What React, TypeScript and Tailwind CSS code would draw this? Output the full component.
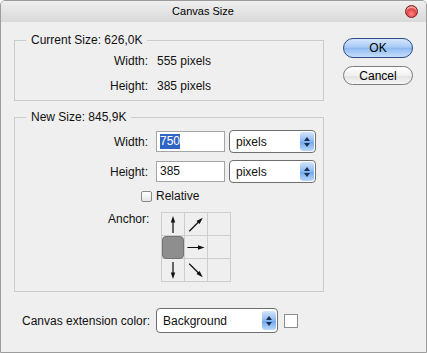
import React from 'react'

const FONT = "font-['Liberation_Sans',Arial,sans-serif]"

function Stepper() {
  return (
    <div className="mr-[1px] flex h-[19px] w-[14px] flex-col items-center justify-center gap-[2px] rounded-[3px] bg-[linear-gradient(to_bottom,#d3e5fb,#8ab8f0_50%,#6ea6ec_51%,#b9d7fa)]">
      <svg width="6" height="4" viewBox="0 0 6 4">
        <polygon points="3,0 6,4 0,4" fill="#1c2f55" />
      </svg>
      <svg width="6" height="4" viewBox="0 0 6 4">
        <polygon points="0,0 6,0 3,4" fill="#1c2f55" />
      </svg>
    </div>
  )
}

function Select({ value, w, h = 'h-[23px]' }: { value: string; w: string; h?: string }) {
  return (
    <div className={`${w} ${h} flex items-center rounded-[4px] border border-[#6f6f6f] bg-white`}>
      <span className="flex-1 pl-[6px] text-[12px] leading-[14px] text-[#111]">{value}</span>
      <Stepper />
    </div>
  )
}

// base arrow points up; rotated per cell
function Arrow({ deg, len = 18 }: { deg: number; len?: number }) {
  const half = len / 2
  return (
    <svg width="23" height="23" viewBox="0 0 23 23">
      <g transform={`rotate(${deg} 11.5 11.5)`}>
        <line x1="11.5" y1={11.5 + half} x2="11.5" y2={11.5 - half + 4} stroke="#111" strokeWidth="1.3" />
        <polygon points={`11.5,${11.5 - half} 9.2,${11.5 - half + 7} 13.8,${11.5 - half + 7}`} fill="#111" />
      </g>
    </svg>
  )
}

const CELLS: (number | 'box' | null)[] = [0, 45, null, 'box', 90, null, 180, 135, null]

export default function App() {
  return (
    <div className={`${FONT} flex h-[353px] w-[427px] flex-col overflow-hidden rounded-t-[5px] border border-[#9c9c9c] bg-[#efefef] text-[#111]`}>
      {/* Title bar */}
      <div className="flex h-[21px] items-center bg-[linear-gradient(to_bottom,#efefef,#d9d9d9)]">
        <div className="flex-1 pl-[9px] text-center text-[11px] leading-[13px] text-black">Canvas Size</div>
        <div className="flex w-[30px] justify-center">
          <div className="h-[13px] w-[13px] rounded-full border border-[#7b1f1f] bg-[radial-gradient(circle_at_50%_70%,#ff8a8a,#e03a3a_55%,#9c1c1c)] shadow-[inset_0_2px_1px_rgba(255,255,255,0.6)]" />
        </div>
      </div>

      {/* Body */}
      <div className="flex flex-1">
        <div className="flex w-[323px] flex-col pl-[13px]">
          {/* Current size */}
          <fieldset className="mt-[11px] w-[310px] border border-[#cbcbcb] pb-[6px]">
            <legend className="ml-[11px] px-[5px] text-[12px] leading-[14px]">Current Size: 626,0K</legend>
            <div className="mt-[6px] flex h-[16px] items-center text-[12px]">
              <span className="w-[133px] text-right">Width:</span>
              <span className="ml-[9px]">555 pixels</span>
            </div>
            <div className="mt-[9px] flex h-[16px] items-center text-[12px]">
              <span className="w-[133px] text-right">Height:</span>
              <span className="ml-[9px]">385 pixels</span>
            </div>
          </fieldset>

          {/* New size */}
          <fieldset className="mt-[9px] w-[310px] border border-[#cbcbcb] pb-[9px]">
            <legend className="ml-[11px] px-[5px] text-[12px] leading-[14px]">New Size: 845,9K</legend>
            <div className="mt-[6px] flex h-[23px] items-center text-[12px]">
              <span className="w-[133px] text-right">Width:</span>
              <div className="ml-[8px] flex h-[21px] w-[69px] items-center border border-[#a4a4a4] bg-white pl-[3px]">
                <span className="bg-[#3165c4] leading-[15px] text-white">750</span>
              </div>
              <div className="ml-[4px]">
                <Select value="pixels" w="w-[87px]" />
              </div>
            </div>
            <div className="mt-[7px] flex h-[23px] items-center text-[12px]">
              <span className="w-[133px] text-right">Height:</span>
              <div className="ml-[8px] flex h-[21px] w-[69px] items-center border border-[#a4a4a4] bg-white pl-[3px]">
                <span className="leading-[15px]">385</span>
              </div>
              <div className="ml-[4px]">
                <Select value="pixels" w="w-[87px]" />
              </div>
            </div>
            <div className="mt-[6px] flex h-[14px] items-center text-[12px]">
              <div className="ml-[126px] h-[11px] w-[11px] rounded-[2px] border border-[#8a8a8a] bg-[linear-gradient(to_bottom,#ffffff,#e6e6e6)]" />
              <span className="ml-[4px]">Relative</span>
            </div>
            <div className="mt-[9px] flex">
              <span className="ml-[93px] w-[53px] text-[12px] leading-[14px]">Anchor:</span>
              <div className="grid grid-cols-3 border-l border-t border-[#cdcdcd]">
                {CELLS.map((c, i) => (
                  <div key={i} className="flex h-[23px] w-[23px] items-center justify-center border-b border-r border-[#cdcdcd]">
                    {c === 'box' ? (
                      <div className="h-[23px] w-[23px] rounded-[4px] border border-[#737373] bg-[#8e8e8e]" />
                    ) : c !== null ? (
                      <Arrow deg={c} len={c % 90 === 0 ? 18 : 20} />
                    ) : null}
                  </div>
                ))}
              </div>
            </div>
          </fieldset>

          {/* Extension color */}
          <div className="mt-[16px] flex h-[25px] items-center pl-[8px] text-[12px]">
            <span className="w-[134px]">Canvas extension color:</span>
            <Select value="Background" w="w-[122px]" h="h-[25px]" />
            <div className="ml-[6px] h-[14px] w-[14px] border border-[#8c8c8c] bg-white" />
          </div>
        </div>

        {/* Buttons */}
        <div className="ml-[19px] flex flex-col">
          <button className="mt-[16px] flex h-[20px] w-[70px] items-center justify-center rounded-full border border-[#2c4a85] bg-[linear-gradient(to_bottom,#d4e6fc,#a6c9f6_47%,#5f86c2_50%,#93bdf2_53%,#c4defc)] text-[12px] leading-[14px] text-black">
            OK
          </button>
          <button className="mt-[8px] flex h-[19px] w-[70px] items-center justify-center rounded-full border border-[#7e7e7e] bg-[linear-gradient(to_bottom,#ffffff,#f0f0f0_50%,#e2e2e2_51%,#f6f6f6)] text-[12px] leading-[14px] text-black">
            Cancel
          </button>
        </div>
      </div>
    </div>
  )
}
